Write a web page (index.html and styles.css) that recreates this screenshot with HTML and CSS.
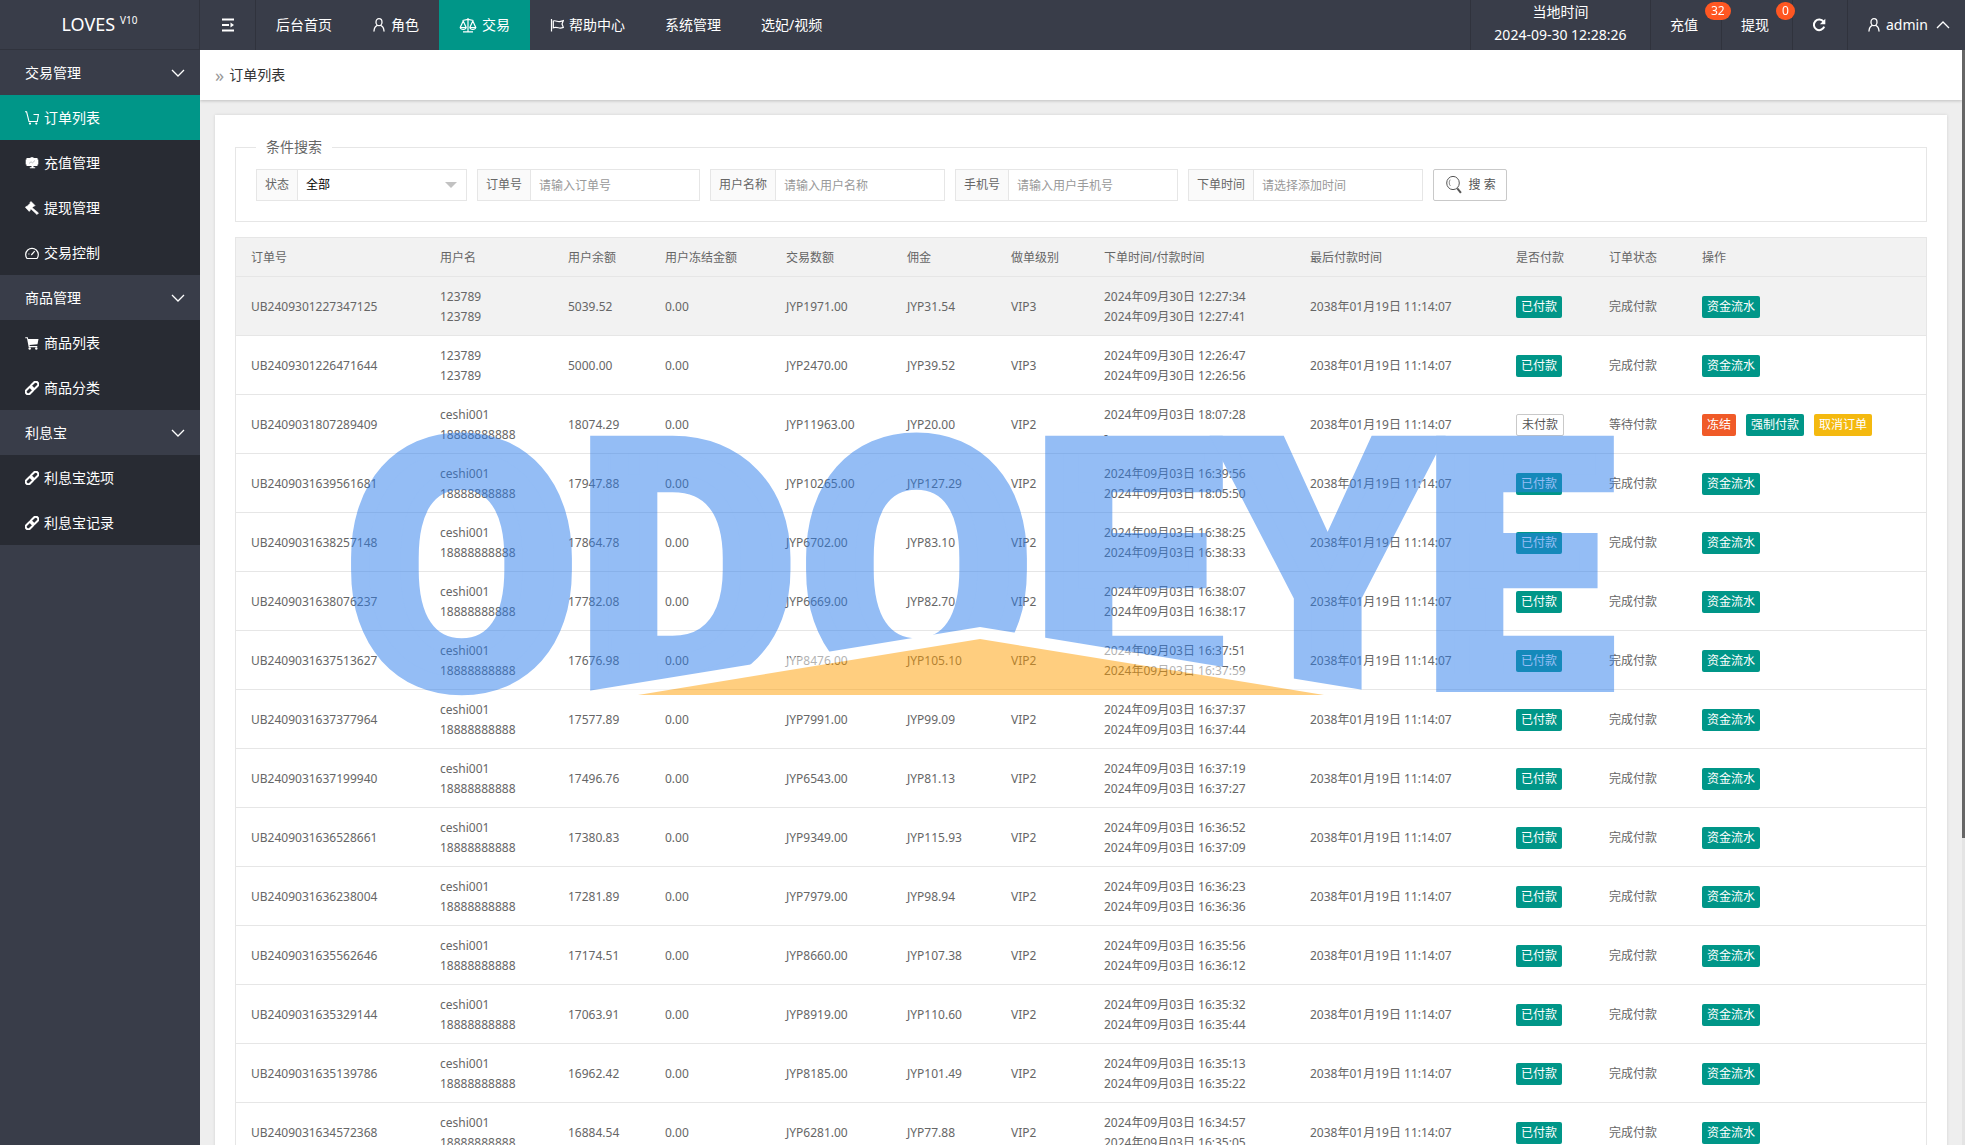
FILE: index.html
```html
<!DOCTYPE html>
<html lang="zh-CN">
<head>
<meta charset="utf-8">
<title>订单列表 - LOVES V10</title>
<meta name="viewport" content="width=device-width, initial-scale=1">
<link rel="stylesheet" href="styles.css">
</head>
<body>
<svg class="sprite" aria-hidden="true">
  <symbol id="i-menu" viewBox="0 0 14 14"><path d="M1 1.5h12M1 7h7M1 12.5h12" stroke="currentColor" stroke-width="1.8" fill="none"/><path d="M9.5 4.6L13 7l-3.500 2.400z" fill="currentColor"/></symbol>
  <symbol id="i-user" viewBox="0 0 14 14"><g fill="none" stroke="currentColor" stroke-width="1.300" stroke-linecap="round"><ellipse cx="7" cy="4.200" rx="3" ry="3.500"/><path d="M5.300 7.400C3.300 8.300 2.200 10.300 2 13M8.700 7.400c2 .9 3.100 2.900 3.300 5.600"/></g></symbol>
  <symbol id="i-scale" viewBox="0 0 18 18"><g fill="none" stroke="currentColor" stroke-width="1.200" stroke-linejoin="round"><path d="M9 2v13.500M4 15.800h10M3.500 4.500L9 3.300l5.500 1.200M4.200 5L1.200 11.500h6zM13.800 5l-3 6.500h6zM1.200 11.500c.5 2.400 5.500 2.400 6 0M10.800 11.500c.5 2.400 5.500 2.400 6 0"/></g></symbol>
  <symbol id="i-flag" viewBox="0 0 14 14"><path d="M1.500 1v12.500M3.300 3c2.500-1 4 1 6.200.6C11 3.400 12 3 13.300 2.600L12 6l1.300 3.400c-2 .9-3.300 1-5 .4C6.600 9.200 5 9 3.300 9.800z" fill="none" stroke="currentColor" stroke-width="1.200"/></symbol>
  <symbol id="i-refresh" viewBox="0 0 14 14"><path d="M11.500 3.700A5.300 5.300 0 1 0 12.200 8.600" fill="none" stroke="currentColor" stroke-width="2"/><path d="M13.300.8v5.400H7.900z" fill="currentColor"/></symbol>
  <symbol id="i-down" viewBox="0 0 14 14"><path d="M1 4l6 6 6-6" fill="none" stroke="currentColor" stroke-width="1.300"/></symbol>
  <symbol id="i-up" viewBox="0 0 14 14"><path d="M1 10l6-6 6 6" fill="none" stroke="currentColor" stroke-width="1.300"/></symbol>
  <symbol id="i-cart" viewBox="0 0 14 14"><path d="M0 .8h1.600L4 10.500h8.300L13.400 3.500H8.500" fill="none" stroke="currentColor" stroke-width="1.100"/><circle cx="5" cy="12.600" r="1.100" fill="currentColor"/><circle cx="11.300" cy="12.600" r="1.100" fill="currentColor"/></symbol>
  <symbol id="i-board" viewBox="0 0 14 14"><path d="M1.500 2h3.200L7 1l2.300 1h3.200v1.500h.8v5h-.8V10h-4v1.300h1.700v1H4.800v-1h1.700V10h-5V8.500H.7v-5h.8z" fill="currentColor"/><path d="M4 7.500l2-1.700 1.500 1L10 4.500" fill="none" stroke="#aaacb2" stroke-width=".8"/></symbol>
  <symbol id="i-gavel" viewBox="0 0 14 14"><path d="M6 .5l4 4-1 1-.5-.2-1.300 1.400L13.500 12 12 13.600 6 8l-1 .8.200.6-1 1L.3 6.300l1-1 .6.200L5.200 2.200 5 1.500z" fill="currentColor" stroke="currentColor" stroke-width=".6" stroke-linejoin="round"/></symbol>
  <symbol id="i-gauge" viewBox="0 0 14 14"><path d="M2 12.500A6.300 6.300 0 1 1 12 12.500z" fill="none" stroke="currentColor" stroke-width="1.200" stroke-linejoin="round"/><path d="M6.300 9l3.400-3.800M3.400 8h1" stroke="currentColor" stroke-width="1.200"/></symbol>
  <symbol id="i-cartfill" viewBox="0 0 14 14"><path d="M.3 1.200h2.500L3.200 3h10.300l-1 5.200-8 .9.300 1H12.300v1.100H3.700L2 2.300H.3z" fill="currentColor"/><circle cx="4.700" cy="12.500" r="1.200" fill="currentColor"/><circle cx="11.300" cy="12.500" r="1.200" fill="currentColor"/></symbol>
  <symbol id="i-link" viewBox="0 0 14 14"><g fill="none" stroke="currentColor" stroke-width="2" transform="rotate(-45 7 7)"><rect x="-.8" y="4.500" width="8.600" height="5" rx="2.500"/><rect x="6.200" y="4.500" width="8.600" height="5" rx="2.500"/></g></symbol>
  <symbol id="i-search" viewBox="0 0 18 20"><g fill="none" stroke="currentColor"><ellipse cx="8" cy="8" rx="6.300" ry="6.600" stroke-width="1"/><path d="M5.200 4.700c-1.400 1.800-1.300 4.600.2 6.200" stroke-width=".7"/><path d="M12.300 13.300l3.600 4.500" stroke-width="2"/></g></symbol>
</svg>

<div class="app">
  <header class="topbar">
    <a class="logo" href="#">LOVES <sup>V10</sup></a>
    <button class="toggle" type="button" aria-label="菜单"><svg class="ico"><use href="#i-menu"/></svg></button>
    <nav class="topnav">
      <a href="#">后台首页</a>
      <a href="#"><svg class="ico"><use href="#i-user"/></svg>角色</a>
      <a href="#" class="active"><svg class="ico wide"><use href="#i-scale"/></svg>交易</a>
      <a href="#"><svg class="ico"><use href="#i-flag"/></svg>帮助中心</a>
      <a href="#">系统管理</a>
      <a href="#">选妃/视频</a>
    </nav>
    <div class="tools">
      <div class="clock"><span>当地时间</span><time>2024-09-30 12:28:26</time></div>
      <a href="#">充值<span class="count">32</span></a>
      <a href="#">提现<span class="count">0</span></a>
      <button type="button" aria-label="刷新"><svg class="ico"><use href="#i-refresh"/></svg></button>
      <a class="account" href="#"><svg class="ico"><use href="#i-user"/></svg>admin<svg class="ico caret"><use href="#i-up"/></svg></a>
    </div>
  </header>

  <nav class="side">
    <button type="button">交易管理<svg class="ico"><use href="#i-down"/></svg></button>
    <div class="sub">
      <a href="#" class="active"><svg class="ico"><use href="#i-cart"/></svg>订单列表</a>
      <a href="#"><svg class="ico"><use href="#i-board"/></svg>充值管理</a>
      <a href="#"><svg class="ico"><use href="#i-gavel"/></svg>提现管理</a>
      <a href="#"><svg class="ico"><use href="#i-gauge"/></svg>交易控制</a>
    </div>
    <button type="button">商品管理<svg class="ico"><use href="#i-down"/></svg></button>
    <div class="sub">
      <a href="#"><svg class="ico"><use href="#i-cartfill"/></svg>商品列表</a>
      <a href="#"><svg class="ico"><use href="#i-link"/></svg>商品分类</a>
    </div>
    <button type="button">利息宝<svg class="ico"><use href="#i-down"/></svg></button>
    <div class="sub">
      <a href="#"><svg class="ico"><use href="#i-link"/></svg>利息宝选项</a>
      <a href="#"><svg class="ico"><use href="#i-link"/></svg>利息宝记录</a>
    </div>
  </nav>

  <main class="main">
    <h1 class="crumb"><span>»</span>订单列表</h1>
    <section class="card">
      <form class="search">
        <fieldset>
          <legend>条件搜索</legend>
          <div class="fields">
            <div class="field"><label for="f-status">状态</label><select id="f-status"><option>全部</option></select></div>
            <div class="field"><label for="f-order">订单号</label><input id="f-order" type="text" placeholder="请输入订单号"></div>
            <div class="field"><label for="f-name">用户名称</label><input id="f-name" type="text" placeholder="请输入用户名称"></div>
            <div class="field"><label for="f-phone">手机号</label><input id="f-phone" type="text" placeholder="请输入用户手机号"></div>
            <div class="field"><label for="f-time">下单时间</label><input id="f-time" type="text" placeholder="请选择添加时间"></div>
            <button class="submit" type="button"><svg class="mag"><use href="#i-search"/></svg>搜 索</button>
          </div>
        </fieldset>
      </form>

      <table class="orders">
        <colgroup><col class="c-no"><col class="c-user"><col class="c-bal"><col class="c-amt"><col class="c-amt"><col class="c-fee"><col class="c-vip"><col class="c-time"><col class="c-time"><col class="c-state"><col class="c-state"><col class="c-ops"></colgroup>
        <thead><tr><th>订单号</th><th>用户名</th><th>用户余额</th><th>用户冻结金额</th><th>交易数额</th><th>佣金</th><th>做单级别</th><th>下单时间/付款时间</th><th>最后付款时间</th><th>是否付款</th><th>订单状态</th><th>操作</th></tr></thead>
        <tbody>
<tr class="hover"><td>UB2409301227347125</td><td>123789<br>123789</td><td>5039.52</td><td>0.00</td><td>JYP1971.00</td><td>JYP31.54</td><td>VIP3</td><td>2024年09月30日 12:27:34<br>2024年09月30日 12:27:41</td><td>2038年01月19日 11:14:07</td><td><span class="tag">已付款</span></td><td>完成付款</td><td><button class="tag" type="button">资金流水</button></td></tr>
<tr><td>UB2409301226471644</td><td>123789<br>123789</td><td>5000.00</td><td>0.00</td><td>JYP2470.00</td><td>JYP39.52</td><td>VIP3</td><td>2024年09月30日 12:26:47<br>2024年09月30日 12:26:56</td><td>2038年01月19日 11:14:07</td><td><span class="tag">已付款</span></td><td>完成付款</td><td><button class="tag" type="button">资金流水</button></td></tr>
<tr><td>UB2409031807289409</td><td>ceshi001<br>18888888888</td><td>18074.29</td><td>0.00</td><td>JYP11963.00</td><td>JYP20.00</td><td>VIP2</td><td>2024年09月03日 18:07:28<br>-</td><td>2038年01月19日 11:14:07</td><td><span class="tag plain">未付款</span></td><td>等待付款</td><td><div class="ops"><button class="tag red" type="button">冻结</button><button class="tag" type="button">强制付款</button><button class="tag yellow" type="button">取消订单</button></div></td></tr>
<tr><td>UB2409031639561681</td><td>ceshi001<br>18888888888</td><td>17947.88</td><td>0.00</td><td>JYP10265.00</td><td>JYP127.29</td><td>VIP2</td><td>2024年09月03日 16:39:56<br>2024年09月03日 18:05:50</td><td>2038年01月19日 11:14:07</td><td><span class="tag">已付款</span></td><td>完成付款</td><td><button class="tag" type="button">资金流水</button></td></tr>
<tr><td>UB2409031638257148</td><td>ceshi001<br>18888888888</td><td>17864.78</td><td>0.00</td><td>JYP6702.00</td><td>JYP83.10</td><td>VIP2</td><td>2024年09月03日 16:38:25<br>2024年09月03日 16:38:33</td><td>2038年01月19日 11:14:07</td><td><span class="tag">已付款</span></td><td>完成付款</td><td><button class="tag" type="button">资金流水</button></td></tr>
<tr><td>UB2409031638076237</td><td>ceshi001<br>18888888888</td><td>17782.08</td><td>0.00</td><td>JYP6669.00</td><td>JYP82.70</td><td>VIP2</td><td>2024年09月03日 16:38:07<br>2024年09月03日 16:38:17</td><td>2038年01月19日 11:14:07</td><td><span class="tag">已付款</span></td><td>完成付款</td><td><button class="tag" type="button">资金流水</button></td></tr>
<tr><td>UB2409031637513627</td><td>ceshi001<br>18888888888</td><td>17676.98</td><td>0.00</td><td>JYP8476.00</td><td>JYP105.10</td><td>VIP2</td><td>2024年09月03日 16:37:51<br>2024年09月03日 16:37:59</td><td>2038年01月19日 11:14:07</td><td><span class="tag">已付款</span></td><td>完成付款</td><td><button class="tag" type="button">资金流水</button></td></tr>
<tr><td>UB2409031637377964</td><td>ceshi001<br>18888888888</td><td>17577.89</td><td>0.00</td><td>JYP7991.00</td><td>JYP99.09</td><td>VIP2</td><td>2024年09月03日 16:37:37<br>2024年09月03日 16:37:44</td><td>2038年01月19日 11:14:07</td><td><span class="tag">已付款</span></td><td>完成付款</td><td><button class="tag" type="button">资金流水</button></td></tr>
<tr><td>UB2409031637199940</td><td>ceshi001<br>18888888888</td><td>17496.76</td><td>0.00</td><td>JYP6543.00</td><td>JYP81.13</td><td>VIP2</td><td>2024年09月03日 16:37:19<br>2024年09月03日 16:37:27</td><td>2038年01月19日 11:14:07</td><td><span class="tag">已付款</span></td><td>完成付款</td><td><button class="tag" type="button">资金流水</button></td></tr>
<tr><td>UB2409031636528661</td><td>ceshi001<br>18888888888</td><td>17380.83</td><td>0.00</td><td>JYP9349.00</td><td>JYP115.93</td><td>VIP2</td><td>2024年09月03日 16:36:52<br>2024年09月03日 16:37:09</td><td>2038年01月19日 11:14:07</td><td><span class="tag">已付款</span></td><td>完成付款</td><td><button class="tag" type="button">资金流水</button></td></tr>
<tr><td>UB2409031636238004</td><td>ceshi001<br>18888888888</td><td>17281.89</td><td>0.00</td><td>JYP7979.00</td><td>JYP98.94</td><td>VIP2</td><td>2024年09月03日 16:36:23<br>2024年09月03日 16:36:36</td><td>2038年01月19日 11:14:07</td><td><span class="tag">已付款</span></td><td>完成付款</td><td><button class="tag" type="button">资金流水</button></td></tr>
<tr><td>UB2409031635562646</td><td>ceshi001<br>18888888888</td><td>17174.51</td><td>0.00</td><td>JYP8660.00</td><td>JYP107.38</td><td>VIP2</td><td>2024年09月03日 16:35:56<br>2024年09月03日 16:36:12</td><td>2038年01月19日 11:14:07</td><td><span class="tag">已付款</span></td><td>完成付款</td><td><button class="tag" type="button">资金流水</button></td></tr>
<tr><td>UB2409031635329144</td><td>ceshi001<br>18888888888</td><td>17063.91</td><td>0.00</td><td>JYP8919.00</td><td>JYP110.60</td><td>VIP2</td><td>2024年09月03日 16:35:32<br>2024年09月03日 16:35:44</td><td>2038年01月19日 11:14:07</td><td><span class="tag">已付款</span></td><td>完成付款</td><td><button class="tag" type="button">资金流水</button></td></tr>
<tr><td>UB2409031635139786</td><td>ceshi001<br>18888888888</td><td>16962.42</td><td>0.00</td><td>JYP8185.00</td><td>JYP101.49</td><td>VIP2</td><td>2024年09月03日 16:35:13<br>2024年09月03日 16:35:22</td><td>2038年01月19日 11:14:07</td><td><span class="tag">已付款</span></td><td>完成付款</td><td><button class="tag" type="button">资金流水</button></td></tr>
<tr><td>UB2409031634572368</td><td>ceshi001<br>18888888888</td><td>16884.54</td><td>0.00</td><td>JYP6281.00</td><td>JYP77.88</td><td>VIP2</td><td>2024年09月03日 16:34:57<br>2024年09月03日 16:35:05</td><td>2038年01月19日 11:14:07</td><td><span class="tag">已付款</span></td><td>完成付款</td><td><button class="tag" type="button">资金流水</button></td></tr>
        </tbody>
      </table>
    </section>
  </main>
  <div class="scroll" aria-hidden="true"><div class="thumb"></div></div>
</div>

<svg class="watermark" viewBox="0 0 1965 1145" role="img" aria-label="ODOEYE">
  <text class="wm-text" y="683" x="346 578 801 1033 1224 1424">ODOEYE</text>
  <path fill="#fff" d="M520 702L980 627L1437 702z"/>
  <path fill="#ff9e00" d="M638 695L980 639L1324 695z"/>
</svg>
</body>
</html>
```
FILE: styles.css
```css
* { box-sizing: border-box; }

body {
  margin: 0;
  font: 12px/20px "Noto Sans", "Noto Sans CJK SC", sans-serif;
  color: #666;
  background: #eee;
}

a { color: inherit; text-decoration: none; }

button, input, select { font: inherit; color: inherit; margin: 0; }

.sprite { position: absolute; width: 0; height: 0; }

.ico { width: 14px; height: 14px; flex: none; }
.ico.wide { width: 18px; height: 18px; }

.app {
  display: grid;
  grid-template: 50px 1fr / 200px 1fr 3px;
  height: 100vh;
  overflow: hidden;
}

/* top bar */
.topbar {
  grid-column: 1 / -1;
  display: flex;
  background: #393d49;
  color: #fff;
  font-size: 14px;
}

.logo {
  width: 200px;
  display: flex;
  justify-content: center;
  gap: 5px;
  font-size: 18px;
  line-height: 48px;
  border-right: 1px solid #30333d;
  border-bottom: 1px solid #30333d;
}
.logo sup { font-size: 10px; line-height: 40px; vertical-align: baseline; }

.toggle {
  width: 56px;
  display: flex;
  align-items: center;
  justify-content: center;
  padding: 0;
  border: 0;
  border-right: 1px solid #30333d;
  background: none;
}

.topnav { display: flex; }
.topnav a {
  display: flex;
  align-items: center;
  gap: 5px;
  padding: 0 20px;
}
.topnav a.active { background: #009688; }

.tools { display: flex; margin-left: auto; }
.tools > * {
  position: relative;
  display: flex;
  align-items: center;
  padding: 0 19px;
  border: 0;
  border-left: 1px solid #30333d;
  background: none;
  color: #fff;
}
.tools > a { width: 71px; }
.tools > button { width: 55px; }
.tools > .clock {
  flex-direction: column;
  width: 180px;
  line-height: 23px;
  white-space: nowrap;
}
.tools > .account { width: 118px; gap: 5px; }
.caret { margin-left: 3px; }

.count {
  position: absolute;
  z-index: 1;
  top: 2px;
  left: 54px;
  padding: 0 6px;
  border-radius: 9px;
  background: #ff5722;
  font-size: 12px;
  line-height: 18px;
}

/* side menu */
.side {
  background: #393d49;
  color: #fff;
  font-size: 14px;
}
.side button, .side a {
  display: flex;
  align-items: center;
  width: 100%;
  height: 45px;
  padding: 0 15px 0 25px;
  gap: 5px;
}
.side button {
  justify-content: space-between;
  border: 0;
  background: none;
}
.sub { background: #282b33; }
.sub .active { background: #009688; }

/* content */
.main { min-width: 0; overflow-y: auto; scrollbar-width: none; }

.crumb {
  display: flex;
  gap: 5px;
  margin: 0;
  padding: 0 15px;
  background: #fff;
  color: #333;
  font-size: 14px;
  font-weight: 400;
  line-height: 50px;
  box-shadow: 0 1px 3px rgba(0, 0, 0, .2);
}
.crumb span { color: #999; font-size: 18px; }

.card {
  margin: 15px;
  padding: 20px;
  background: #fff;
  box-shadow: 0 0 3px rgba(0, 0, 0, .12);
}

.search fieldset {
  margin: 0 0 15px;
  padding: 10px 20px 20px;
  border: 1px solid #e6e6e6;
}
.search legend { padding: 0 10px; font-size: 14px; line-height: 24px; }

.fields { display: flex; flex-wrap: wrap; gap: 10px; }
.field { display: flex; }
.field label {
  height: 32px;
  padding: 0 8px;
  border: 1px solid #e6e6e6;
  background: #fafafa;
  line-height: 30px;
  white-space: nowrap;
}
.field input, .field select {
  width: 170px;
  height: 32px;
  margin-left: -1px;
  padding: 0 8px;
  border: 1px solid #e6e6e6;
  border-radius: 0;
  background: #fff;
}
.field select {
  appearance: none;
  color: #000;
  background: #fff url("data:image/svg+xml,%3Csvg xmlns='http://www.w3.org/2000/svg' width='12' height='6'%3E%3Cpath d='M0 0h12L6 6z' fill='%23c2c2c2'/%3E%3C/svg%3E") no-repeat right 9px center;
}
.field input::placeholder { color: #999; opacity: 1; }

.submit {
  display: flex;
  align-items: center;
  justify-content: center;
  gap: 6px;
  min-width: 74px;
  height: 32px;
  padding: 0 10px;
  border: 1px solid #c9c9c9;
  border-radius: 2px;
  background: #fff;
  color: #555;
  white-space: nowrap;
}
.mag { width: 18px; height: 20px; }

/* orders table */
.orders {
  width: 100%;
  table-layout: fixed;
  border: 1px solid #e6e6e6;
  border-spacing: 0;
}
.orders th, .orders td {
  padding: 10px 15px 8px;
  border-bottom: 1px solid #e6e6e6;
  text-align: left;
  font-weight: 400;
  white-space: nowrap;
}
.orders th { background: #f2f2f2; }
.orders .hover { background: #f2f2f2; }
.c-no { width: 189px; }
.c-user { width: 128px; }
.c-bal { width: 97px; }
.c-amt { width: 121px; }
.c-fee { width: 104px; }
.c-vip { width: 93px; }
.c-time { width: 206px; }
.c-state { width: 93px; }
.c-ops { width: 239px; }

.tag {
  display: block;
  width: fit-content;
  height: 22px;
  padding: 0 5px;
  border: 0;
  border-radius: 2px;
  background: #009688;
  color: #fff;
  line-height: 22px;
}
.tag.plain {
  border: 1px solid #c9c9c9;
  background: #fff;
  color: #555;
  line-height: 20px;
}
.tag.red { background: #f05a28; }
.tag.yellow { background: #f4b90f; }
.ops { display: flex; gap: 10px; }

.scroll { background: #e4e4e4; }
.thumb { height: 72%; background: #666; }

/* watermark laid over the whole window */
.watermark {
  position: fixed;
  inset: 0;
  width: 100%;
  height: 100%;
  opacity: .5;
  pointer-events: none;
}
.wm-text {
  font: bold 335px Roboto, sans-serif;
  fill: #2a7cec;
  stroke: #2a7cec;
  stroke-width: 18px;
}
```
